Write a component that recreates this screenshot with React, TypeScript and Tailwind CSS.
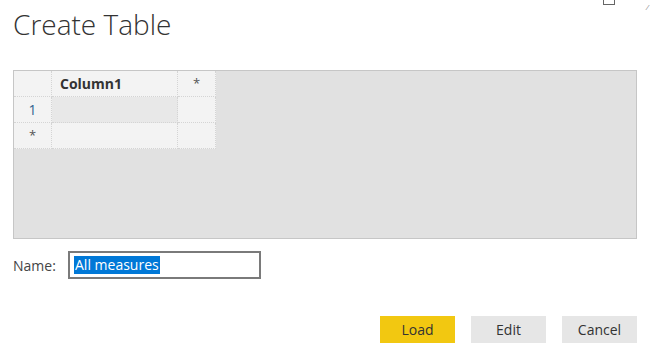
const cell = 'border-r border-b border-dotted border-[#d4d4d4] bg-[#f3f3f3]';

export default function App() {
  return (
    <div className="relative h-[359px] w-[650px] overflow-hidden bg-white font-['Open_Sans','Noto_Sans',sans-serif] text-[#333]">
      {/* window controls, clipped at top */}
      <div className="absolute left-[603px] top-[-6px] h-[11px] w-[12px] border border-[#666]" />
      <div className="absolute left-[647px] top-[3px] text-[8px] leading-none text-[#777]">⁄</div>

      <div className="px-[13px] pt-[4px]">
        <h1 className="text-[28px] font-light leading-[40px] text-[#333]">Create Table</h1>

        <div className="mt-[26px] h-[169px] border border-[#c6c6c6] bg-[#e1e1e1]">
          <div className="grid w-[202px] grid-cols-[38px_126px_38px] text-[13px]">
            <div className={`${cell} h-[26px]`} />
            <div className={`${cell} flex h-[26px] items-center pl-[8px] text-[14px] font-bold text-[#333]`}>Column1</div>
            <div className={`${cell} flex h-[26px] items-center justify-center text-[#555]`}>*</div>

            <div className={`${cell} flex h-[26px] items-center justify-center text-[14px] text-[#2f5f8f]`}>1</div>
            <div className="h-[26px] border-r border-b border-dotted border-[#d4d4d4] bg-[#e8e8e8]" />
            <div className={`${cell} h-[26px]`} />

            <div className={`${cell} flex h-[26px] items-center justify-center text-[#555]`}>*</div>
            <div className={`${cell} h-[26px]`} />
            <div className={`${cell} h-[26px]`} />
          </div>
        </div>

        <div className="mt-[12px] flex items-center">
          <span className="w-[55px] text-[14px] text-[#444]">Name:</span>
          <div className="flex h-[28px] w-[193px] items-center border-2 border-[#7a7a7a] pl-[4px]">
            <span className="bg-[#0078d7] px-[1px] text-[14px] leading-[18px] text-white">All measures</span>
          </div>
        </div>

        <div className="mt-[37px] flex justify-end gap-[16px] pr-[0px]">
          <button className="h-[27px] w-[75px] bg-[#f2c811] text-[14px] text-[#333]">Load</button>
          <button className="h-[27px] w-[75px] bg-[#e6e6e6] text-[14px] text-[#333]">Edit</button>
          <button className="h-[27px] w-[75px] bg-[#e6e6e6] text-[14px] text-[#333]">Cancel</button>
        </div>
      </div>
    </div>
  );
}
